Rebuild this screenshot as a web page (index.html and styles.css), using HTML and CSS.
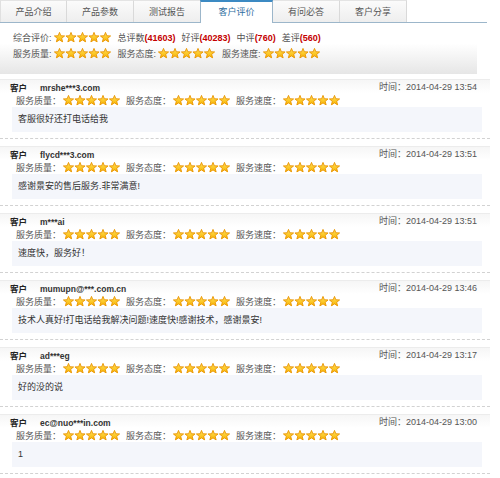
FILE: index.html
```html
<!DOCTYPE html>
<html lang="zh-CN">
<head>
<meta charset="utf-8">
<title>客户评价</title>
<link rel="stylesheet" href="styles.css">
</head>
<body>
<svg class="defs" width="0" height="0" aria-hidden="true">
  <defs>
    <linearGradient id="sg" x1="0" y1="0" x2="0" y2="1">
      <stop offset="0" stop-color="#ffe05a"/>
      <stop offset="1" stop-color="#f8b400"/>
    </linearGradient>
    <symbol id="star" viewBox="0 0 11 10.5">
      <path d="M5.5 0.4 L6.85 3.75 L10.6 3.95 L7.7 6.3 L8.65 9.95 L5.5 7.9 L2.35 9.95 L3.3 6.3 L0.4 3.95 L4.15 3.75 Z" fill="url(#sg)" stroke="#e99400" stroke-width="0.9" stroke-linejoin="round"/>
    </symbol>
    <symbol id="five" viewBox="0 0 57 11">
      <use href="#star" x="0" y="0" width="11" height="10.5"/>
      <use href="#star" x="11.5" y="0" width="11" height="10.5"/>
      <use href="#star" x="23" y="0" width="11" height="10.5"/>
      <use href="#star" x="34.5" y="0" width="11" height="10.5"/>
      <use href="#star" x="46" y="0" width="11" height="10.5"/>
    </symbol>
  </defs>
</svg>

<div class="tabs">
  <div class="tab">产品介绍</div>
  <div class="tab">产品参数</div>
  <div class="tab">测试报告</div>
  <div class="tab active">客户评价</div>
  <div class="tab">有问必答</div>
  <div class="tab">客户分享</div>
</div>

<div class="summary">
  <div class="sum-line">
    <span class="lbl">综合评价:</span><svg class="stars"><use href="#five"/></svg>
    <span class="cnt">总评数<b>(41603)</b></span>
    <span class="cnt">好评<b>(40283)</b></span>
    <span class="cnt">中评<b>(760)</b></span>
    <span class="cnt">差评<b>(560)</b></span>
  </div>
  <div class="sum-line">
    <span class="lbl">服务质量:</span><svg class="stars"><use href="#five"/></svg>
    <span class="lbl">服务态度:</span><svg class="stars"><use href="#five"/></svg>
    <span class="lbl">服务速度:</span><svg class="stars"><use href="#five"/></svg>
  </div>
</div>

<div class="reviews">
  <div class="review">
    <div class="rv-head"><span class="who"><b class="cust">客户</b><b class="user">mrshe***3.com</b></span><span class="time">时间：2014-04-29 13:54</span></div>
    <div class="rv-rates"><span class="rl">服务质量：</span><svg class="stars"><use href="#five"/></svg><span class="rl">服务态度：</span><svg class="stars"><use href="#five"/></svg><span class="rl">服务速度：</span><svg class="stars"><use href="#five"/></svg></div>
    <div class="rv-content">客服很好还打电话给我</div>
    <div class="rv-foot"></div>
  </div>
  <div class="review">
    <div class="rv-head"><span class="who"><b class="cust">客户</b><b class="user">flycd***3.com</b></span><span class="time">时间：2014-04-29 13:51</span></div>
    <div class="rv-rates"><span class="rl">服务质量：</span><svg class="stars"><use href="#five"/></svg><span class="rl">服务态度：</span><svg class="stars"><use href="#five"/></svg><span class="rl">服务速度：</span><svg class="stars"><use href="#five"/></svg></div>
    <div class="rv-content">感谢景安的售后服务.非常满意!</div>
    <div class="rv-foot"></div>
  </div>
  <div class="review">
    <div class="rv-head"><span class="who"><b class="cust">客户</b><b class="user">m***ai</b></span><span class="time">时间：2014-04-29 13:51</span></div>
    <div class="rv-rates"><span class="rl">服务质量：</span><svg class="stars"><use href="#five"/></svg><span class="rl">服务态度：</span><svg class="stars"><use href="#five"/></svg><span class="rl">服务速度：</span><svg class="stars"><use href="#five"/></svg></div>
    <div class="rv-content">速度快，服务好！</div>
    <div class="rv-foot"></div>
  </div>
  <div class="review">
    <div class="rv-head"><span class="who"><b class="cust">客户</b><b class="user">mumupn@***.com.cn</b></span><span class="time">时间：2014-04-29 13:46</span></div>
    <div class="rv-rates"><span class="rl">服务质量：</span><svg class="stars"><use href="#five"/></svg><span class="rl">服务态度：</span><svg class="stars"><use href="#five"/></svg><span class="rl">服务速度：</span><svg class="stars"><use href="#five"/></svg></div>
    <div class="rv-content">技术人真好!打电话给我解决问题!速度快!感谢技术，感谢景安!</div>
    <div class="rv-foot"></div>
  </div>
  <div class="review">
    <div class="rv-head"><span class="who"><b class="cust">客户</b><b class="user">ad***eg</b></span><span class="time">时间：2014-04-29 13:17</span></div>
    <div class="rv-rates"><span class="rl">服务质量：</span><svg class="stars"><use href="#five"/></svg><span class="rl">服务态度：</span><svg class="stars"><use href="#five"/></svg><span class="rl">服务速度：</span><svg class="stars"><use href="#five"/></svg></div>
    <div class="rv-content">好的没的说</div>
    <div class="rv-foot"></div>
  </div>
  <div class="review">
    <div class="rv-head"><span class="who"><b class="cust">客户</b><b class="user">ec@nuo***in.com</b></span><span class="time">时间：2014-04-29 13:00</span></div>
    <div class="rv-rates"><span class="rl">服务质量：</span><svg class="stars"><use href="#five"/></svg><span class="rl">服务态度：</span><svg class="stars"><use href="#five"/></svg><span class="rl">服务速度：</span><svg class="stars"><use href="#five"/></svg></div>
    <div class="rv-content">1</div>
    <div class="rv-foot"></div>
  </div>
</div>
</body>
</html>
```
FILE: styles.css
```css
* { box-sizing: border-box; }
body {
  margin: 0;
  background: #fff;
  font-family: "Liberation Sans", "Noto Sans CJK SC", sans-serif;
  font-size: 9px;
  color: #333;
}
.defs { position: absolute; width: 0; height: 0; }

.tabs {
  display: flex;
  width: 487px;
  height: 23px;
  border-bottom: 1px solid #9cb6ca;
}
.tab {
  width: 67px;
  height: 22px;
  line-height: 22px;
  text-align: center;
  color: #555;
  background: linear-gradient(#fbfbfb, #eeeeee);
  border-right: 1px solid #d9d9d9;
  border-top: 1px solid #e4e4e4;
}
.tab:first-child { border-left: 1px solid #e0e0e0; }
.tab.active {
  width: 73px;
  height: 23px;
  line-height: 20px;
  background: #fff;
  color: #2f6d9e;
  border-top: 2px solid #3c8ac3;
  border-left: 1px solid #9cb6ca;
  border-right: 1px solid #9cb6ca;
  margin-left: -1px;
}

.summary {
  width: 477px;
  height: 51px;
  padding: 6px 0 0 13px;
  background: linear-gradient(#ffffff 40%, #e6e6e6);
}
.sum-line {
  display: flex;
  align-items: center;
  height: 16px;
  color: #555;
}
.lbl { margin-right: 2px; }
.stars { width: 57px; height: 11px; flex: none; margin-right: 7px; }
.cnt { margin-right: 6px; }
.cnt b { color: #c40000; font-weight: bold; }

.reviews { width: 490px; }
.review { margin-top: 7px; }
.review:first-child { margin-top: 5px; }
.rv-head {
  display: flex;
  justify-content: space-between;
  align-items: center;
  height: 14px;
  padding: 0 10px;
  border-top: 1px solid #ececec;
  background: linear-gradient(#f6f6f6, #ffffff);
}
.cust { color: #222; font-size: 8.5px; margin-right: 13px; }
.user { color: #333; font-size: 8.5px; }
.time { color: #555; margin-right: 3px; }
.rv-rates {
  display: flex;
  align-items: center;
  height: 14px;
  padding-left: 16px;
  color: #555;
}
.rv-rates .rl { margin-right: 2px; }
.rv-rates .stars { margin-right: 6px; }
.rv-content {
  margin: 0 8px 0 12px;
  height: 25px;
  line-height: 25px;
  padding-left: 6px;
  background: #f4f6fb;
  color: #333;
}
.rv-foot {
  height: 7px;
  border-bottom: 1px dashed #d2d2d2;
}
```
